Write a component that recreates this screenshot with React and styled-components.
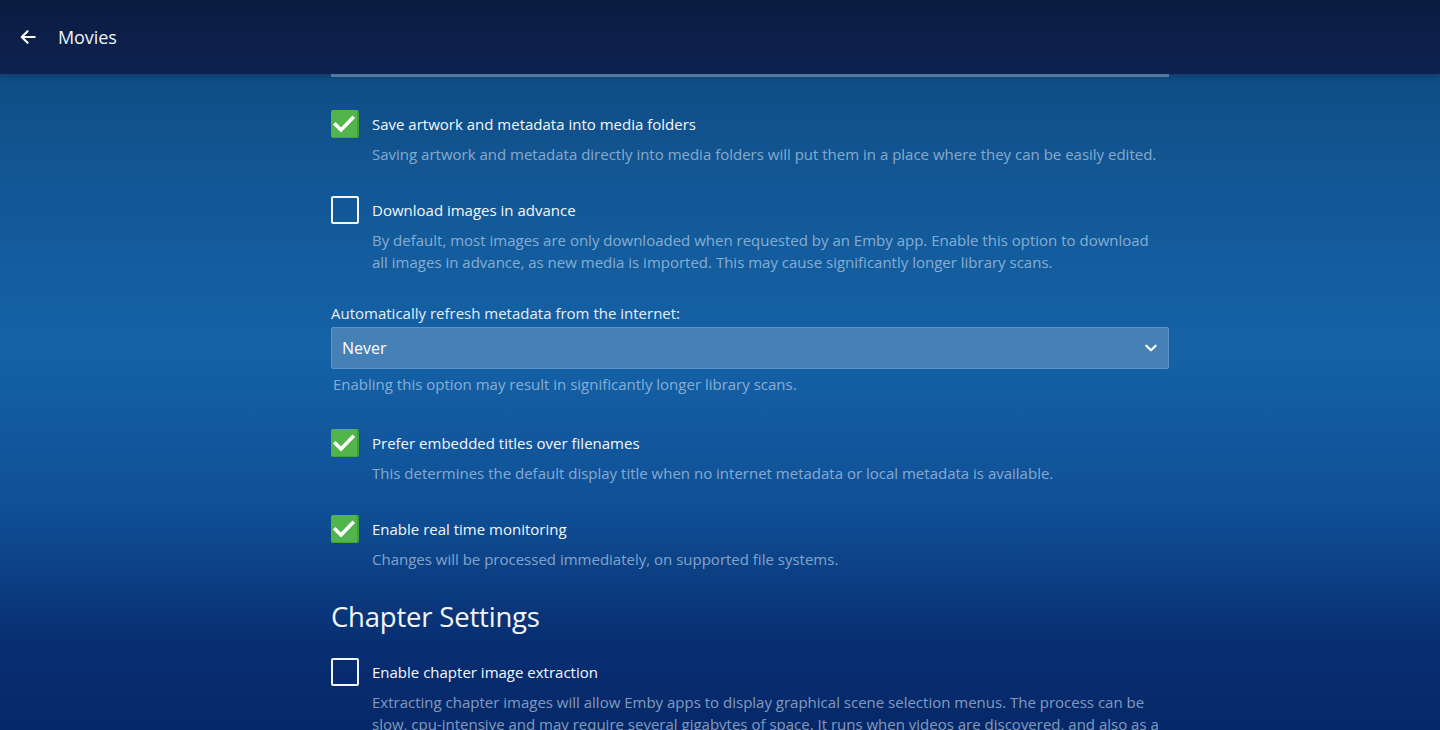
import React from 'react';
import styled, { createGlobalStyle } from 'styled-components';

const GlobalStyle = createGlobalStyle`
    html, body {
        margin: 0;
        padding: 0;
        height: 100%;
    }
    body {
        font-family: "Open Sans", "Noto Sans", sans-serif;
        overflow: hidden;
        background: #0f4b82;
    }
`;

const Page = styled.div`
    width: 1440px;
    height: 730px;
    overflow: hidden;
    display: flex;
    flex-direction: column;
    background: linear-gradient(180deg, #0e4579 0%, #125795 25%, #1562a7 48%, #0f4f95 70%, #082e72 88%, #062868 100%);
`;

const Header = styled.header`
    flex: 0 0 74px;
    display: flex;
    align-items: center;
    gap: 19px;
    padding: 0 17px;
    background: linear-gradient(180deg, #0b1c40 0%, #0d2250 100%);
    box-shadow: 0 2px 6px rgba(0, 0, 0, 0.25);
    position: relative;
    z-index: 2;
`;

const BackButton = styled.button`
    border: 0;
    background: none;
    padding: 0;
    width: 22px;
    height: 22px;
    display: flex;
    align-items: center;
    justify-content: center;
    color: #fff;
`;

const Title = styled.h1`
    margin: 0;
    font-size: 18px;
    font-weight: 400;
    color: #eef2f8;
    letter-spacing: -0.1px;
`;

const Content = styled.main`
    flex: 1;
    display: flex;
    justify-content: center;
    padding-left: 60px;
`;

const Column = styled.div`
    width: 838px;
    display: flex;
    flex-direction: column;
`;

const SelectTail = styled.div`
    height: 3px;
    background: #5e8fbd;
    margin-bottom: 33px;
`;

const CheckRow = styled.div`
    display: grid;
    grid-template-columns: 28px 1fr;
    column-gap: 13px;
    margin-bottom: ${p => p.$gap}px;
`;

const Box = styled.span`
    width: 28px;
    height: 28px;
    box-sizing: border-box;
    border-radius: 2px;
    display: flex;
    align-items: center;
    justify-content: center;
    ${p => p.$checked
        ? `background: #52b54b; border-right: 2px solid #3f9e3a; border-bottom: 1px solid #44a33e;`
        : `border: 2px solid #f2f5f9;`}
`;

const Label = styled.div`
    font-size: 15px;
    line-height: 28px;
    color: #f4f7fb;
`;

const Description = styled.div`
    grid-column: 2;
    font-size: 15px;
    line-height: 22px;
    margin-top: 5px;
    color: rgba(210, 225, 245, 0.62);
    max-width: 790px;
`;

const FieldLabel = styled.div`
    font-size: 15px;
    line-height: 22px;
    color: #e6eef8;
    margin-bottom: 3px;
`;

const Select = styled.div`
    height: 42px;
    box-sizing: border-box;
    display: flex;
    align-items: center;
    justify-content: space-between;
    padding: 0 9px 0 10px;
    background: #4580b6;
    border: 1px solid #5e94c5;
    border-radius: 2px;
    color: #fff;
    font-size: 16px;
    font-weight: 500;
`;

const Helper = styled.div`
    font-size: 15px;
    line-height: 22px;
    padding-left: 2px;
    margin-top: 4px;
    margin-bottom: 34px;
    color: rgba(210, 225, 245, 0.62);
`;

const Heading = styled.h2`
    margin: 0 0 21px;
    font-size: 27.5px;
    line-height: 40px;
    font-weight: 400;
    color: #f2f6fb;
    letter-spacing: -0.2px;
`;

const Check = () => (
    <svg width="24" height="24" viewBox="0 0 24 24">
        <path d="M3.5 12.5l5.5 5.5L20.5 6" fill="none" stroke="#fff" strokeWidth="3.6" strokeLinecap="square" />
    </svg>
);

const Checkbox = ({ checked, label, gap = 31, children }) => (
    <CheckRow $gap={gap}>
        <Box $checked={checked}>{checked && <Check />}</Box>
        <Label>{label}</Label>
        <Description>{children}</Description>
    </CheckRow>
);

export default function App() {
    return (
        <>
            <GlobalStyle />
            <Page>
                <Header>
                    <BackButton aria-label="Back">
                        <svg width="20" height="20" viewBox="0 0 24 24">
                            <path d="M20 12H5M11.5 5L4.5 12l7 7" fill="none" stroke="#fff" strokeWidth="2.6" strokeLinecap="round" strokeLinejoin="round" />
                        </svg>
                    </BackButton>
                    <Title>Movies</Title>
                </Header>
                <Content>
                    <Column>
                        <SelectTail />
                        <Checkbox checked label="Save artwork and metadata into media folders">
                            Saving artwork and metadata directly into media folders will put them in a place where they can be easily edited.
                        </Checkbox>
                        <Checkbox label="Download images in advance" gap={29}>
                            By default, most images are only downloaded when requested by an Emby app. Enable this option to download all images in advance, as new media is imported. This may cause significantly longer library scans.
                        </Checkbox>
                        <FieldLabel>Automatically refresh metadata from the internet:</FieldLabel>
                        <Select>
                            <span>Never</span>
                            <svg width="16" height="16" viewBox="0 0 24 24">
                                <path d="M5 8.5l7 7 7-7" fill="none" stroke="#fff" strokeWidth="3.2" strokeLinecap="round" strokeLinejoin="round" />
                            </svg>
                        </Select>
                        <Helper>Enabling this option may result in significantly longer library scans.</Helper>
                        <Checkbox checked label="Prefer embedded titles over filenames">
                            This determines the default display title when no internet metadata or local metadata is available.
                        </Checkbox>
                        <Checkbox checked label="Enable real time monitoring" gap={27}>
                            Changes will be processed immediately, on supported file systems.
                        </Checkbox>
                        <Heading>Chapter Settings</Heading>
                        <Checkbox label="Enable chapter image extraction">
                            Extracting chapter images will allow Emby apps to display graphical scene selection menus. The process can be slow, cpu-intensive and may require several gigabytes of space. It runs when videos are discovered, and also as a nightly scheduled task.
                        </Checkbox>
                    </Column>
                </Content>
            </Page>
        </>
    );
}
